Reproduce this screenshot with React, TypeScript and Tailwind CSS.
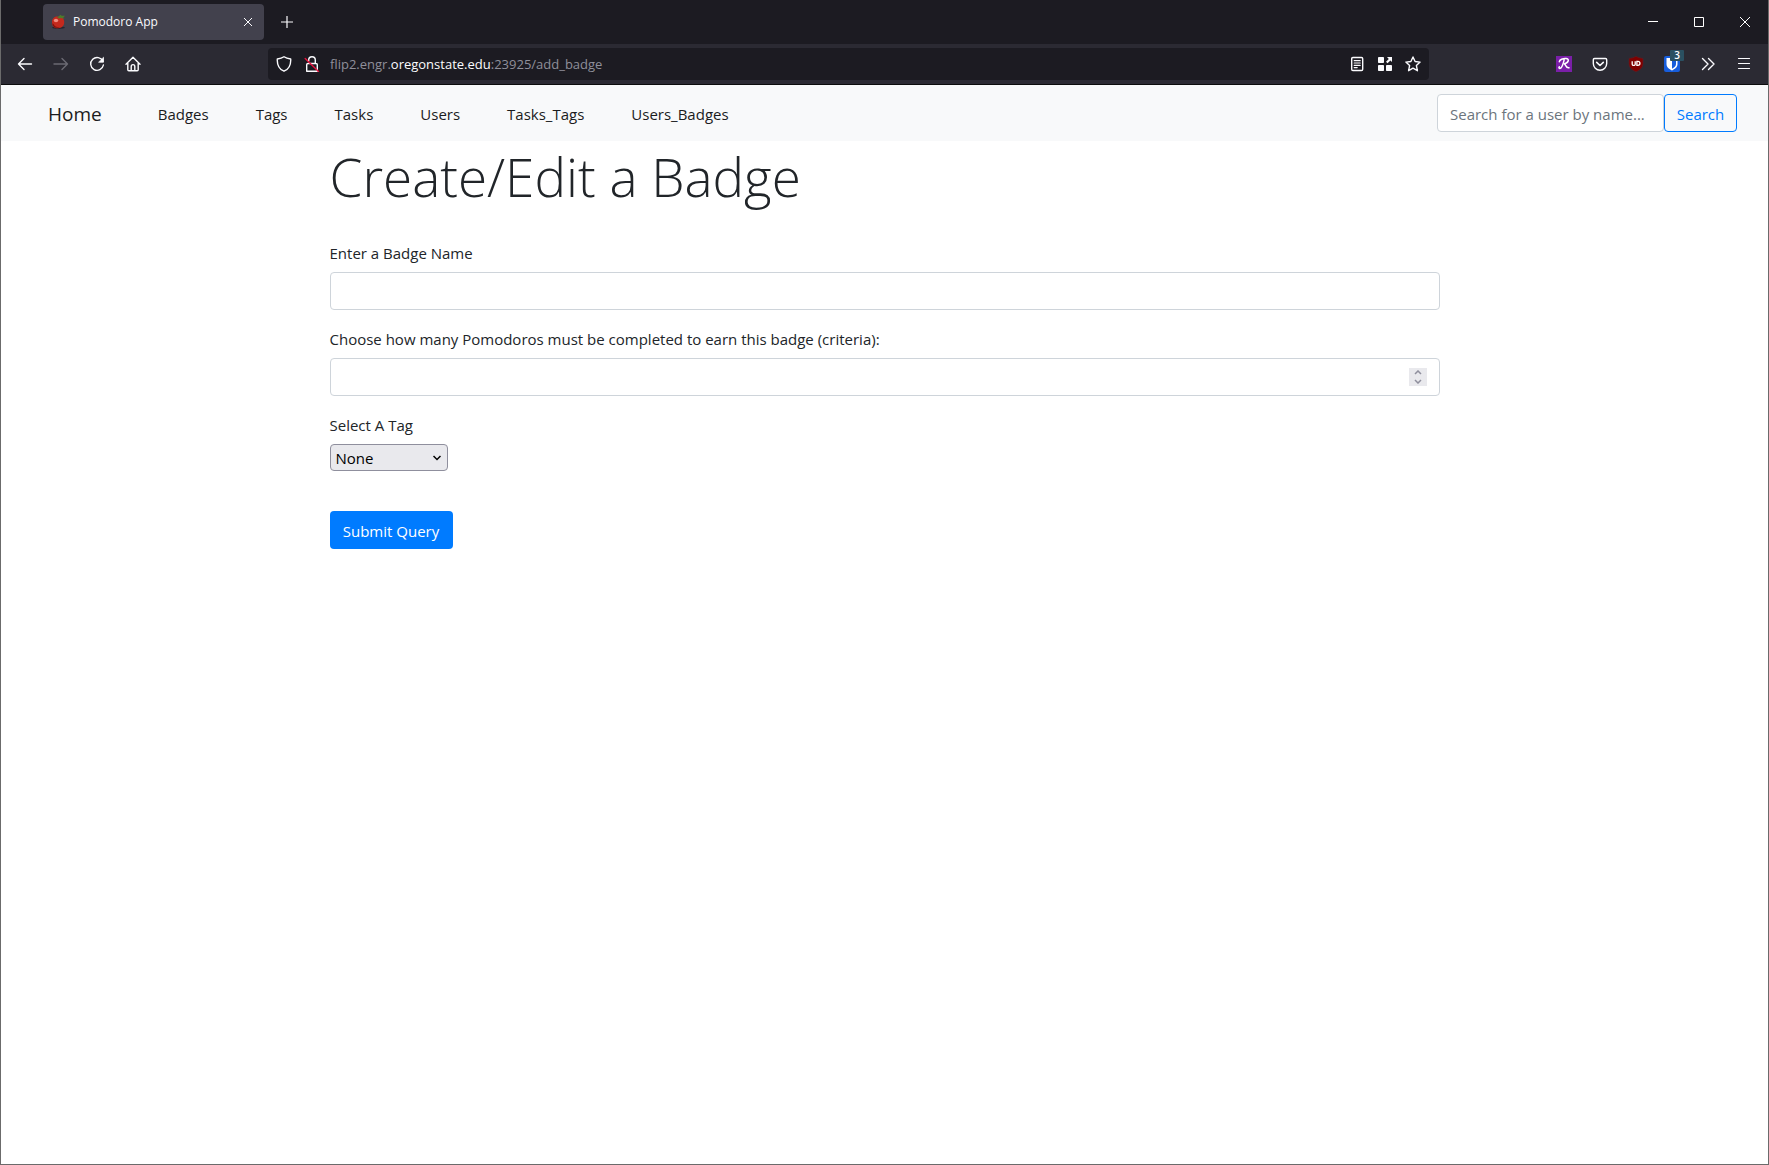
import React, { useState } from 'react';
import type { ReactNode } from 'react';

function Glyph({ children, size = 16, className = '' }: { children: ReactNode; size?: number; className?: string }) {
  return (
    <svg
      width={size}
      height={size}
      viewBox="0 0 16 16"
      fill="none"
      stroke="currentColor"
      strokeWidth="1.4"
      strokeLinecap="round"
      strokeLinejoin="round"
      className={className}
      aria-hidden="true"
    >
      {children}
    </svg>
  );
}

function ToolButton({ label, className = '', children }: { label: string; className?: string; children: ReactNode }) {
  return (
    <button type="button" aria-label={label} className={`flex h-8 shrink-0 items-center justify-center ${className}`}>
      {children}
    </button>
  );
}

function TomatoIcon() {
  return (
    <svg width="16" height="16" viewBox="0 0 16 16" aria-hidden="true">
      <ellipse cx="7.5" cy="13.6" rx="6.500" ry="1.3" fill="#1d1a22" opacity="0.7" />
      <path d="M1 8.200C1 4.300 3.600 2.400 7 2.600c3.600-.2 6.200 1.800 6.200 5.500 0 4-2.400 6.100-6.100 6.100S1 12.200 1 8.200z" fill="#c4291d" />
      <path d="M2.500 10c1 2.600 4 3.700 6.500 3.200-3 1.500-7.300.5-7.700-3.800z" fill="#7d120d" />
      <ellipse cx="5" cy="6.500" rx="2.200" ry="1.700" fill="#ef8d80" />
      <path d="M6 3.200 8 2.300 9.200.8l1.500 1 3.300-.1-1.700 1.700 1.200 1.400-3.300-.8L8.200 4.600z" fill="#4d7a2c" />
    </svg>
  );
}

function TabStrip() {
  return (
    <div className="flex h-11 items-center bg-[#1c1b22] pl-[42px]">
      <div className="flex h-9 w-[221px] items-center rounded bg-[#42414d] pl-2 pr-2 text-[#fbfbfe]">
        <TomatoIcon />
        <span className="ml-[6px] flex-1 text-[12px] leading-4">Pomodoro App</span>
        <ToolButton label="Close tab" className="w-4">
          <svg width="10" height="10" viewBox="0 0 10 10" stroke="currentColor" strokeWidth="1" aria-hidden="true">
            <path d="M1 1l8 8M9 1L1 9" />
          </svg>
        </ToolButton>
      </div>
      <ToolButton label="New tab" className="ml-[7px] w-8 text-[#fbfbfe]">
        <svg width="12" height="12" viewBox="0 0 12 12" stroke="currentColor" strokeWidth="1.2" aria-hidden="true">
          <path d="M6 0v12M0 6h12" />
        </svg>
      </ToolButton>
      <div className="flex-1" />
      <div className="flex text-white">
        <ToolButton label="Minimize" className="w-[46px]">
          <svg width="10" height="10" viewBox="0 0 10 10" stroke="currentColor" aria-hidden="true">
            <path d="M0 4.500h10" />
          </svg>
        </ToolButton>
        <ToolButton label="Maximize" className="w-[46px]">
          <svg width="10" height="10" viewBox="0 0 10 10" fill="none" stroke="currentColor" aria-hidden="true">
            <path d="M.5.5h9v9h-9z" />
          </svg>
        </ToolButton>
        <ToolButton label="Close window" className="w-[46px]">
          <svg width="10" height="10" viewBox="0 0 10 10" stroke="currentColor" aria-hidden="true">
            <path d="M0 0l10 10M10 0L0 10" />
          </svg>
        </ToolButton>
      </div>
    </div>
  );
}

function AddressBar() {
  return (
    <div className="flex h-8 w-[1161px] min-w-0 shrink items-center rounded bg-[#1c1b22] pl-[2px] pr-[2px] text-[#fbfbfe]">
      <ToolButton label="Tracking protection" className="w-7">
        <Glyph>
          <path d="M8 .8C6.300 2 4 2.700 1.300 3c-.3 5.500 1.500 10 6.700 12.200C13.200 13 15 8.500 14.700 3 12 2.700 9.700 2 8 .8z" />
        </Glyph>
      </ToolButton>
      <ToolButton label="Connection not secure" className="w-7">
        <Glyph>
          <path d="M4.700 5V4a3.300 3.300 0 0 1 6.600 0v3.300M2.700 15.200h10.600V8.800c0-.8-.5-1.300-1.300-1.300H4c-.8 0-1.300.5-1.300 1.300z" />
          <path d="M1.200 2.500l13.300 13" stroke="#e5123d" />
        </Glyph>
      </ToolButton>
      <div className="ml-[4px] flex-1 truncate text-[13px] leading-5 text-[#8f8f9a]">
        flip2.engr.<span className="text-[#fbfbfe]">oregonstate.edu</span>:23925/add_badge
      </div>
      <ToolButton label="Reader view" className="w-7">
        <Glyph>
          <rect x="2.700" y="1.500" width="11" height="13" rx="1.200" />
          <path d="M5.200 4.700h6M5.200 7h6M5.200 9.300h6M5.200 11.600h3" strokeWidth="1.200" />
        </Glyph>
      </ToolButton>
      <ToolButton label="Page apps" className="w-7">
        <svg width="16" height="16" viewBox="0 0 16 16" fill="currentColor" aria-hidden="true">
          <rect x="1" y="1" width="6" height="6" rx=".8" />
          <rect x="1" y="9" width="6" height="6" rx=".8" />
          <rect x="9" y="9" width="6" height="6" rx=".8" />
          <path d="M10 1h5v5l-1.600-1.500L10.500 7.200 9 5.800l2.800-2.900z" />
        </svg>
      </ToolButton>
      <ToolButton label="Bookmark this page" className="w-7">
        <Glyph>
          <path d="M8 1l2.100 4.500 5 .6-3.700 3.500 1 5.100L8 12.200l-4.400 2.500 1-5.100L.9 6.100l5-.6z" />
        </Glyph>
      </ToolButton>
    </div>
  );
}

function Toolbar() {
  return (
    <div className="flex h-[41px] items-center border-b border-[#0c0c0d] bg-[#2b2a33] pl-[6px] pr-[6px] text-[#fbfbfe]">
      <ToolButton label="Back" className="w-9">
        <Glyph>
          <path d="M14.500 8H1.500M7 2.500L1.500 8 7 13.500" />
        </Glyph>
      </ToolButton>
      <ToolButton label="Forward" className="w-9 text-[#6b6a73]">
        <Glyph>
          <path d="M1 8h13.500M9 2.500L14.500 8 9 13.500" />
        </Glyph>
      </ToolButton>
      <ToolButton label="Reload" className="w-9">
        <Glyph>
          <path d="M13.900 5.200A6.400 6.400 0 1 0 14.400 9" />
          <path d="M14.500 1.700v4.500H10z" fill="currentColor" strokeWidth=".8" />
        </Glyph>
      </ToolButton>
      <ToolButton label="Home" className="w-9">
        <Glyph>
          <path d="M1 8.200L8 1.300l7 6.900M2.800 7v6.800c0 .7.400 1 1 1h8.400c.6 0 1-.3 1-1V7M6.200 14.500v-4c0-1.300.6-1.900 1.800-1.900s1.800.6 1.800 1.900v4" />
        </Glyph>
      </ToolButton>
      <div className="w-[117px] shrink" />
      <AddressBar />
      <div className="flex-1" />
      <ToolButton label="Rakuten extension" className="w-9">
        <svg width="16" height="16" viewBox="0 0 16 16" aria-hidden="true">
          <path d="M0 0h16v16H0z" fill="#7a1fa8" />
          <path
            d="M3.300 5.800C3.500 3.500 7 2.300 10 2.500c3.600.3 3 4-1.800 5.500 1.800.3 1.500 4.500 4.800 3.800M8.300 3.200C7.500 6.500 6.500 11.500 4.300 12.300c-1.100.4-1.800-.6-1-1.400"
            fill="none"
            stroke="white"
            strokeWidth="1.500"
            strokeLinecap="round"
          />
        </svg>
      </ToolButton>
      <ToolButton label="Save to Pocket" className="w-9">
        <Glyph>
          <path d="M2.500 2.500h11c.7 0 1.200.5 1.200 1.200v3.800a6.700 6.700 0 0 1-13.400 0V3.700c0-.7.5-1.200 1.200-1.200z" />
          <path d="M4.700 6.400L8 9.500l3.300-3.100" strokeWidth="1.600" />
        </Glyph>
      </ToolButton>
      <ToolButton label="uBlock Origin" className="w-9">
        <svg width="16" height="16" viewBox="0 0 16 16" aria-hidden="true">
          <path d="M8 .3C6 1.500 3.500 2.200 1 2.400v5c0 4 2.500 6.300 7 8.300 4.500-2 7-4.300 7-8.300v-5c-2.500-.2-5-.9-7-2.100z" fill="#800000" stroke="#5b2028" strokeWidth=".6" />
          <path d="M4.200 5.300v2.900c0 1.600 3 1.600 3 0V5.300M8.900 5.300v4h1c2.700 0 2.700-4 0-4z" fill="none" stroke="white" strokeWidth="1.300" />
        </svg>
      </ToolButton>
      <div className="relative">
        <ToolButton label="Bitwarden" className="w-9">
          <svg width="16" height="16" viewBox="0 0 16 16" aria-hidden="true">
            <rect width="16" height="16" rx="2" fill="#175ddc" />
            <path d="M2.500 2h11v6c0 3.500-2.800 5-5.500 6.500C5.300 13 2.500 11.500 2.500 8z" fill="white" />
            <path d="M8 3.500h4V8c0 2.300-1.800 3.500-4 4.800z" fill="#175ddc" />
          </svg>
        </ToolButton>
        <span className="absolute left-4 top-[2px] h-[11px] w-[14px] rounded-[1px] bg-[#2a5061] text-center text-[10px] font-semibold leading-[11px] text-white">
          3
        </span>
      </div>
      <ToolButton label="More tools" className="w-9">
        <Glyph>
          <path d="M2.500 2.500L8 8l-5.500 5.500M8.500 2.500L14 8l-5.500 5.500" />
        </Glyph>
      </ToolButton>
      <ToolButton label="Open application menu" className="w-9">
        <Glyph>
          <path d="M2.500 2.500h11M2.500 7.500h11M2.500 12.500h11" strokeWidth="1.200" />
        </Glyph>
      </ToolButton>
    </div>
  );
}

const links = ['Badges', 'Tags', 'Tasks', 'Users', 'Tasks_Tags', 'Users_Badges'];

function SiteNav() {
  return (
    <nav className="flex h-14 items-center bg-[#f8f9fa] pl-[47px] pr-[31px] text-[#1b1c1d]">
      <a href="#home" className="mr-14 pt-[2px] text-[19px] leading-[30px]">
        Home
      </a>
      <div className="flex flex-1 gap-[47px] pt-[2px]">
        {links.map((name) => (
          <a key={name} href={`#${name.toLowerCase()}`}>
            {name}
          </a>
        ))}
      </div>
      <form className="flex" onSubmit={(e) => e.preventDefault()}>
        <input
          type="text"
          aria-label="Search for a user by name"
          placeholder="Search for a user by name..."
          className="h-[38px] w-[227px] rounded border border-[#ced4da] bg-white pl-3 pr-1 pt-[2px] placeholder:text-[#6c757d]"
        />
        <button type="submit" className="h-[38px] w-[73px] rounded border border-[#007bff] pt-[2px] text-[#007bff]">
          Search
        </button>
      </form>
    </nav>
  );
}

const field = 'h-[38px] w-full rounded border border-[#ced4da] bg-white px-3';
const caption = 'mb-[6px] block leading-[26px]';

function BadgeForm() {
  const [count, setCount] = useState('');
  const step = (by: number) => setCount(String(Number(count || 0) + by));
  return (
    <main className="mx-auto w-full max-w-[1140px] px-[15px]">
      <h1 className="mb-7 text-[53px] font-light leading-[71px]">Create/Edit a Badge</h1>
      <form onSubmit={(e) => e.preventDefault()}>
        <div className="mb-4">
          <label htmlFor="badge-name" className={caption}>
            Enter a Badge Name
          </label>
          <input id="badge-name" type="text" className={`block ${field}`} />
        </div>
        <div className="mb-4">
          <label htmlFor="criteria" className={caption}>
            Choose how many Pomodoros must be completed to earn this badge (criteria):
          </label>
          <div className="relative">
            <input
              id="criteria"
              type="number"
              value={count}
              onChange={(e) => setCount(e.target.value)}
              className={`block [appearance:textfield] ${field}`}
            />
            <div className="absolute right-[13px] top-[10px] flex h-[18px] w-[18px] flex-col bg-[#e9e9ed] text-[#8f8f9d]">
              <button type="button" aria-label="Increase" onClick={() => step(1)} className="flex h-[9px] items-center justify-center">
                <svg width="8" height="5" viewBox="0 0 8 5" fill="none" stroke="currentColor" strokeWidth="1.500" aria-hidden="true">
                  <path d="M1 4l3-3 3 3" />
                </svg>
              </button>
              <button type="button" aria-label="Decrease" onClick={() => step(-1)} className="flex h-[9px] items-center justify-center">
                <svg width="8" height="5" viewBox="0 0 8 5" fill="none" stroke="currentColor" strokeWidth="1.500" aria-hidden="true">
                  <path d="M1 1l3 3 3-3" />
                </svg>
              </button>
            </div>
          </div>
        </div>
        <div className="mb-10">
          <label htmlFor="tag" className={caption}>
            Select A Tag
          </label>
          <div className="relative w-[118px]">
            <select
              id="tag"
              className="block h-[27px] w-full appearance-none rounded border border-[#8f8f9d] bg-[#e9e9ed] px-[5px] leading-6 text-black"
            >
              <option>None</option>
            </select>
            <svg
              width="8"
              height="6"
              viewBox="0 0 8 6"
              fill="none"
              stroke="black"
              strokeWidth="1.500"
              className="pointer-events-none absolute right-[7px] top-[11px]"
              aria-hidden="true"
            >
              <path d="M.5 1L4 4.500 7.500 1" />
            </svg>
          </div>
        </div>
        <button type="submit" className="h-[38px] w-[123px] rounded bg-[#007bff] pt-[2px] text-white">
          Submit Query
        </button>
      </form>
    </main>
  );
}

export default function App() {
  return (
    <div className="flex min-h-screen flex-col border-x border-b border-[#6b6b6b] bg-white font-['Open_Sans',sans-serif] text-[15px] leading-6 text-[#212529]">
      <header>
        <TabStrip />
        <Toolbar />
      </header>
      <SiteNav />
      <BadgeForm />
    </div>
  );
}
